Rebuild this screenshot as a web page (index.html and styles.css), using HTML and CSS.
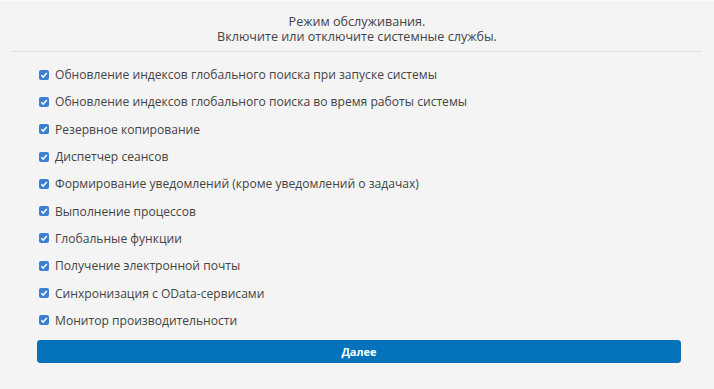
FILE: index.html
```html
<!DOCTYPE html>
<html lang="ru">
<head>
<meta charset="utf-8">
<link rel="stylesheet" href="styles.css">
</head>
<body>
<div class="panel">
  <div class="header">
    <div>Режим обслуживания.</div>
    <div>Включите или отключите системные службы.</div>
  </div>
  <ul class="list">
    <li><span class="cb"><svg viewBox="0 0 10 10"><path d="M2.3 5.2 L4.2 7.1 L7.8 3" /></svg></span>Обновление индексов глобального поиска при запуске системы</li>
    <li><span class="cb"><svg viewBox="0 0 10 10"><path d="M2.3 5.2 L4.2 7.1 L7.8 3" /></svg></span>Обновление индексов глобального поиска во время работы системы</li>
    <li><span class="cb"><svg viewBox="0 0 10 10"><path d="M2.3 5.2 L4.2 7.1 L7.8 3" /></svg></span>Резервное копирование</li>
    <li><span class="cb"><svg viewBox="0 0 10 10"><path d="M2.3 5.2 L4.2 7.1 L7.8 3" /></svg></span>Диспетчер сеансов</li>
    <li><span class="cb"><svg viewBox="0 0 10 10"><path d="M2.3 5.2 L4.2 7.1 L7.8 3" /></svg></span>Формирование уведомлений (кроме уведомлений о задачах)</li>
    <li><span class="cb"><svg viewBox="0 0 10 10"><path d="M2.3 5.2 L4.2 7.1 L7.8 3" /></svg></span>Выполнение процессов</li>
    <li><span class="cb"><svg viewBox="0 0 10 10"><path d="M2.3 5.2 L4.2 7.1 L7.8 3" /></svg></span>Глобальные функции</li>
    <li><span class="cb"><svg viewBox="0 0 10 10"><path d="M2.3 5.2 L4.2 7.1 L7.8 3" /></svg></span>Получение электронной почты</li>
    <li><span class="cb"><svg viewBox="0 0 10 10"><path d="M2.3 5.2 L4.2 7.1 L7.8 3" /></svg></span>Синхронизация с OData-сервисами</li>
    <li><span class="cb"><svg viewBox="0 0 10 10"><path d="M2.3 5.2 L4.2 7.1 L7.8 3" /></svg></span>Монитор производительности</li>
  </ul>
  <button class="next">Далее</button>
</div>
</body>
</html>
```
FILE: styles.css
```css
html, body {
  margin: 0;
  padding: 0;
  background: #f4f4f4;
}
body {
  font-family: "Open Sans", "Noto Sans", sans-serif;
  color: #444;
  width: 714px;
  height: 389px;
  overflow: hidden;
}
.panel {
  box-sizing: border-box;
  height: 389px;
  padding: 14px 12px 0 12px;
  border-top: 1px solid #fbfbfb;
}
.header {
  text-align: center;
  font-size: 12.6px;
  line-height: 14.5px;
  padding-bottom: 7px;
  border-bottom: 1px solid #dedede;
}
.list {
  list-style: none;
  margin: 0;
  padding: 9px 0 0 27px;
}
.list li {
  display: flex;
  align-items: center;
  height: 27.3px;
  font-size: 12.1px;
  color: #444;
}
.cb {
  box-sizing: border-box;
  width: 10px;
  height: 10px;
  border-radius: 2px;
  background: #3a7fd0;
  margin-right: 6px;
  display: flex;
}
.cb svg {
  width: 10px;
  height: 10px;
  fill: none;
  stroke: #fff;
  stroke-width: 1.5;
}
.next {
  display: block;
  margin: 6px 0 0 25px;
  width: 644px;
  height: 23px;
  border: 1px solid #0c6eb4;
  border-radius: 3px;
  background: #0572bc;
  color: #fff;
  font-family: "Open Sans", sans-serif;
  font-weight: bold;
  font-size: 11px;
  padding: 0;
}
```
